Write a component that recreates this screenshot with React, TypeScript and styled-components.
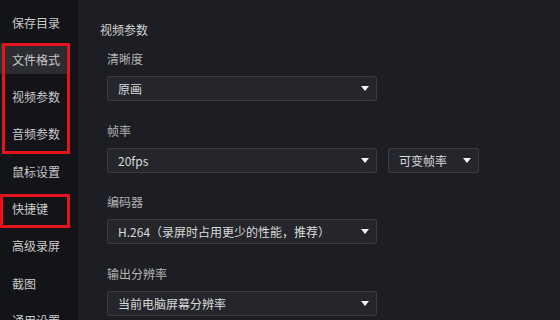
import styled, { createGlobalStyle } from 'styled-components';

const GlobalStyle = createGlobalStyle`
  html, body {
    margin: 0;
    padding: 0;
    background: #1d1e23;
  }
  body {
    font-family: "Noto Sans CJK SC", "Noto Sans", sans-serif;
  }
`;

const Page = styled.div`
  position: relative;
  display: flex;
  width: 560px;
  height: 320px;
  overflow: hidden;
  background: #1d1e23;
`;

const Sidebar = styled.nav`
  width: 78px;
  flex-shrink: 0;
  background: #131418;
  display: flex;
  flex-direction: column;
  gap: 7.33px;
  padding-top: 7px;
  box-sizing: border-box;
`;

const NavItem = styled.div<{ $active?: boolean }>`
  height: 30px;
  flex-shrink: 0;
  margin-right: 10px;
  padding-left: 12px;
  display: flex;
  align-items: center;
  font-size: 12px;
  color: #c9c9c9;
  background: ${p => (p.$active ? '#2c2d31' : 'transparent')};
`;

// red annotation frames drawn over the sidebar
const Mark = styled.div<{ $top: number; $left: number; $w: number; $h: number }>`
  position: absolute;
  top: ${p => p.$top}px;
  left: ${p => p.$left}px;
  width: ${p => p.$w}px;
  height: ${p => p.$h}px;
  border: 3px solid #e3141b;
  box-sizing: border-box;
  pointer-events: none;
`;

const Content = styled.main`
  flex: 1;
  padding: 20px 0 0 22px;
  display: flex;
  flex-direction: column;
`;

const Heading = styled.div`
  font-size: 12px;
  line-height: 20px;
  color: #d2d2d2;
  margin-bottom: 9px;
`;

const Fields = styled.div`
  padding-left: 7px;
  display: flex;
  flex-direction: column;
  gap: 19.6px;
`;

const Field = styled.div`
  display: flex;
  flex-direction: column;
  gap: 7px;
`;

const Label = styled.div`
  font-size: 12px;
  line-height: 20px;
  color: #b4b4b4;
`;

const Row = styled.div`
  display: flex;
  gap: 11px;
`;

const Select = styled.div<{ $w: number }>`
  width: ${p => p.$w}px;
  height: 25px;
  box-sizing: border-box;
  background: #25262b;
  border: 1px solid #3b3c41;
  border-radius: 2px;
  display: flex;
  align-items: center;
  justify-content: space-between;
  padding: 0 7px 0 10px;
  font-size: 12px;
  color: #d9d9d9;
`;

const Arrow = styled.span`
  width: 0;
  height: 0;
  border-left: 4px solid transparent;
  border-right: 4px solid transparent;
  border-top: 5px solid #f2f2f2;
`;

const navItems = ['保存目录', '文件格式', '视频参数', '音频参数', '鼠标设置', '快捷键', '高级录屏', '截图', '通用设置'];

function Dropdown({ value, width }: { value: string; width: number }) {
  return (
    <Select $w={width}>
      <span>{value}</span>
      <Arrow />
    </Select>
  );
}

export default function App() {
  return (
    <Page>
      <GlobalStyle />
      <Sidebar>
        {navItems.map(item => (
          <NavItem key={item} $active={item === '文件格式'}>
            {item}
          </NavItem>
        ))}
      </Sidebar>
      <Content>
        <Heading>视频参数</Heading>
        <Fields>
          <Field>
            <Label>清晰度</Label>
            <Dropdown value="原画" width={270} />
          </Field>
          <Field>
            <Label>帧率</Label>
            <Row>
              <Dropdown value="20fps" width={270} />
              <Dropdown value="可变帧率" width={91} />
            </Row>
          </Field>
          <Field>
            <Label>编码器</Label>
            <Dropdown value="H.264（录屏时占用更少的性能，推荐）" width={270} />
          </Field>
          <Field>
            <Label>输出分辨率</Label>
            <Dropdown value="当前电脑屏幕分辨率" width={270} />
          </Field>
        </Fields>
      </Content>
      <Mark $top={43} $left={2} $w={68} $h={111} />
      <Mark $top={194} $left={0} $w={70} $h={34} />
    </Page>
  );
}
